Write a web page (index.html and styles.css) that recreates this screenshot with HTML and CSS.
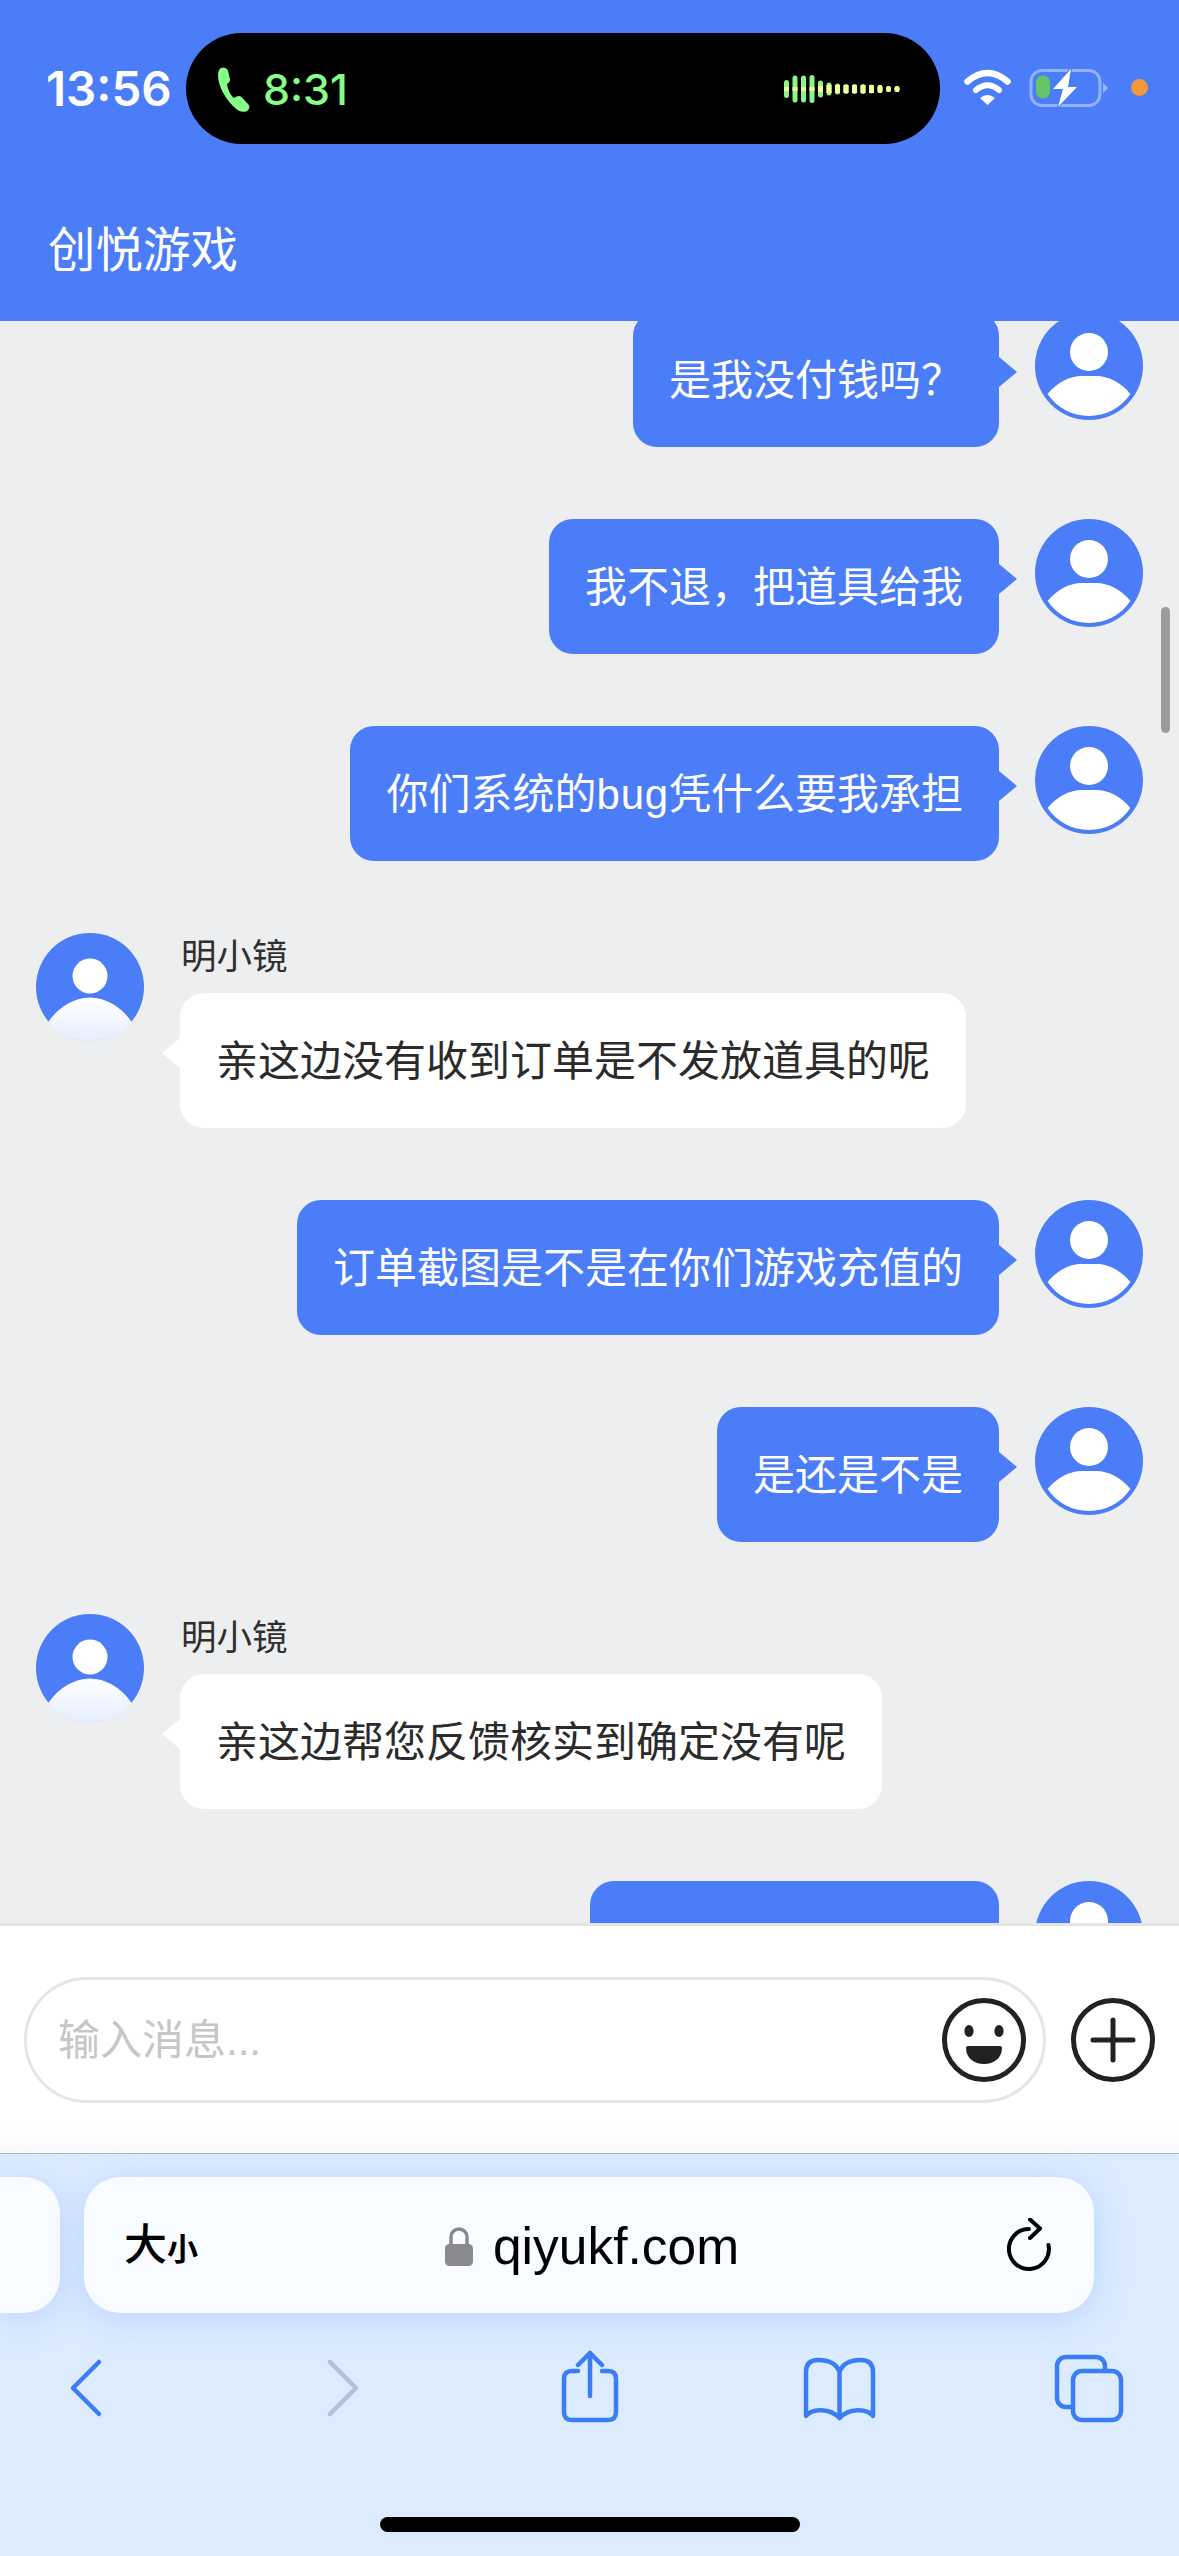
FILE: index.html
```html
<!DOCTYPE html>
<html lang="zh-CN">
<head>
<meta charset="utf-8">
<title>创悦游戏</title>
<link rel="stylesheet" href="styles.css">
</head>
<body>
<svg class="defs" width="0" height="0" aria-hidden="true">
  <defs>
    <linearGradient id="bodyfade" x1="0" y1="0" x2="0" y2="1">
      <stop offset="0" stop-color="#ffffff"/>
      <stop offset="1" stop-color="#e6eefe"/>
    </linearGradient>
    <symbol id="av-out" viewBox="0 0 108 108">
      <circle cx="54" cy="54" r="54" fill="#4a7df7"/>
      <circle cx="54" cy="40" r="19" fill="#fff"/>
      <path d="M12.6 82C22 70 36 64 46 64H62C72 64 86 70 95.4 82A50 50 0 0 1 12.6 82Z" fill="#fff"/>
    </symbol>
    <symbol id="av-in" viewBox="0 0 108 108">
      <circle cx="54" cy="54" r="54" fill="#4a7df7"/>
      <circle cx="54" cy="43" r="17.5" fill="#fff"/>
      <path d="M13 89C24 73 40 65 54 65S84 73 95 89A54 54 0 0 1 13 89Z" fill="url(#bodyfade)" stroke="url(#bodyfade)" stroke-width="1.2"/>
    </symbol>
  </defs>
</svg>
<div class="phone">
  <header class="header">
    <div class="status">
      <span class="time">13:56</span>
      <div class="island">
        <svg class="call-icon" width="32" height="46" viewBox="0 0 32 46"><path d="M3 1C6-.5 9 1 10 4L12 12C12.5 15 10 16 9 17C9.5 22 13 29 16 31C18 30 20 28 23 29.5L30 37C32 39 32 42 29 44C25 46 20 44.5 15 39C6 30 0 18 0 8C0 5 1 2 3 1Z" fill="#84ff87"/></svg>
        <span class="call-time">8:31</span>
        <svg class="wave" width="119" height="30" viewBox="0 0 119 30">
          <g fill="#8cf58a">
            <rect x="0" y="6" width="5" height="18" rx="2.5"/>
            <rect x="8.5" y="1.5" width="5" height="27" rx="2.5"/>
            <rect x="17" y="1.5" width="5" height="27" rx="2.5"/>
            <rect x="25.5" y="1" width="5" height="28" rx="2.5"/>
            <rect x="34" y="6.5" width="5" height="17" rx="2.5"/>
            <rect x="42.5" y="8.5" width="5" height="13" rx="2.5"/>
            <rect x="51" y="9.5" width="5" height="11" rx="2.5"/>
            <rect x="59.5" y="10" width="5" height="10" rx="2.5"/>
            <rect x="68" y="10" width="5" height="10" rx="2.5"/>
            <rect x="76.5" y="10" width="5" height="10" rx="2.5"/>
            <rect x="85" y="10.5" width="5" height="9" rx="2.5"/>
            <rect x="93.5" y="11" width="5" height="8" rx="2.5"/>
            <rect x="102" y="12" width="5" height="6" rx="2.5"/>
            <rect x="110.5" y="12" width="5" height="6" rx="2.5"/>
          </g>
          <g fill="#f4ff9c">
            <rect x="0" y="13" width="5" height="4"/><rect x="8.5" y="13" width="5" height="4"/>
            <rect x="17" y="13" width="5" height="4"/><rect x="25.5" y="13" width="5" height="4"/>
            <rect x="34" y="12" width="5" height="6"/><rect x="42.5" y="11" width="5" height="8"/>
            <rect x="51" y="11" width="5" height="8"/><rect x="59.5" y="11" width="5" height="8"/>
            <rect x="68" y="11" width="5" height="8"/><rect x="76.5" y="11" width="5" height="8"/>
            <rect x="85" y="11" width="5" height="8"/><rect x="93.5" y="11" width="5" height="8" rx="2.5"/>
            <rect x="102" y="12" width="5" height="6" rx="2.5"/><rect x="110.5" y="12" width="5" height="6" rx="2.5"/>
          </g>
        </svg>
      </div>
      <svg class="wifi" width="47" height="36" viewBox="0 0 47 36" fill="none" stroke="#fff">
        <path d="M3.5 12.5Q23.5-4.5 43.5 12.5" stroke-width="6.5" stroke-linecap="round"/>
        <path d="M12 21Q23.5 11.5 35 21" stroke-width="6" stroke-linecap="round"/>
        <path d="M16 29Q23.5 23 31 29L23.5 36Z" fill="#fff" stroke="none"/>
      </svg>
      <svg class="battery" width="82" height="40" viewBox="0 0 82 40">
        <rect x="2" y="2.5" width="69" height="35" rx="11" fill="none" stroke="#fff" stroke-opacity=".4" stroke-width="3"/>
        <path d="M74 14.5L79 20L74 25.5Z" fill="#fff" fill-opacity=".4"/>
        <rect x="7" y="7.5" width="14" height="23" rx="7" fill="#65c466"/>
        <path d="M42 1L24 21H34L29 39L48 19H39Z" fill="#fff" stroke="#4a7df7" stroke-width="2" stroke-linejoin="round" paint-order="stroke"/>
      </svg>
      <span class="mic-dot"></span>
    </div>
    <h1 class="title">创悦游戏</h1>
  </header>

  <main class="chat">
    <div class="thread">
      <div class="row out">
        <div class="bubble">是我没付钱吗？</div>
        <svg class="avatar"><use href="#av-out"/></svg>
      </div>
      <div class="row out">
        <div class="bubble">我不退，把道具给我</div>
        <svg class="avatar"><use href="#av-out"/></svg>
      </div>
      <div class="row out">
        <div class="bubble">你们系统的<span class="latin">bug</span>凭什么要我承担</div>
        <svg class="avatar"><use href="#av-out"/></svg>
      </div>
      <div class="row in">
        <svg class="avatar"><use href="#av-in"/></svg>
        <div class="incoming">
          <div class="name">明小镜</div>
          <div class="bubble">亲这边没有收到订单是不发放道具的呢</div>
        </div>
      </div>
      <div class="row out">
        <div class="bubble">订单截图是不是在你们游戏充值的</div>
        <svg class="avatar"><use href="#av-out"/></svg>
      </div>
      <div class="row out">
        <div class="bubble">是还是不是</div>
        <svg class="avatar"><use href="#av-out"/></svg>
      </div>
      <div class="row in">
        <svg class="avatar"><use href="#av-in"/></svg>
        <div class="incoming">
          <div class="name">明小镜</div>
          <div class="bubble">亲这边帮您反馈核实到确定没有呢</div>
        </div>
      </div>
      <div class="row out">
        <div class="bubble bubble-cut"></div>
        <svg class="avatar"><use href="#av-out"/></svg>
      </div>
    </div>
    <div class="scrollbar"></div>
  </main>

  <div class="composer">
    <div class="input">
      <span class="placeholder">输入消息...</span>
      <svg class="round-icon" width="84" height="84" viewBox="0 0 84 84">
        <circle cx="42" cy="42" r="39.5" fill="none" stroke="#222" stroke-width="5"/>
        <ellipse cx="27" cy="33" rx="4.6" ry="6" fill="#222"/>
        <ellipse cx="57" cy="33" rx="4.6" ry="6" fill="#222"/>
        <path d="M24 50Q24 48 26 48H58Q60 48 60 50C60 60 52 66 42 66C32 66 24 60 24 50Z" fill="#222"/>
      </svg>
    </div>
    <svg class="round-icon plus" width="84" height="84" viewBox="0 0 84 84" fill="none" stroke="#222">
      <circle cx="42" cy="42" r="39.5" stroke-width="5"/>
      <path d="M22 42H62M42 22V62" stroke-width="5" stroke-linecap="round"/>
    </svg>
  </div>

  <div class="safari">
    <div class="tabs-row">
      <div class="tab-stub"></div>
      <div class="urlbar">
        <div class="aa"><span class="aa-big">大</span><span class="aa-small">小</span></div>
        <div class="address">
          <svg width="28" height="39" viewBox="0 0 28 39">
            <path d="M6 18V10A8 8 0 0 1 22 10V18" fill="none" stroke="#8a8a8e" stroke-width="3.5"/>
            <rect x="0" y="17" width="28" height="22" rx="4.5" fill="#8a8a8e"/>
          </svg>
          <span class="host">qiyukf.com</span>
        </div>
        <svg class="reload" width="53" height="54" viewBox="0 0 53 54" fill="none" stroke="#000" stroke-width="4" stroke-linecap="round" stroke-linejoin="round">
          <path d="M22 11A20 20 0 1 0 41.5 27"/>
          <path d="M23 1.5L33 10.5L23 20"/>
        </svg>
      </div>
    </div>
    <nav class="toolbar">
      <svg class="tool" width="80" height="80" viewBox="0 0 80 80" fill="none" stroke="#3a7df6" stroke-width="4.5" stroke-linecap="round" stroke-linejoin="round">
        <path d="M52 12L26 38L52 64"/>
      </svg>
      <svg class="tool" width="80" height="80" viewBox="0 0 80 80" fill="none" stroke="#b5c0d3" stroke-width="4.5" stroke-linecap="round" stroke-linejoin="round">
        <path d="M33 12L59 38L33 64"/>
      </svg>
      <svg class="tool" width="80" height="80" viewBox="0 0 80 80" fill="none" stroke="#3a7df6" stroke-width="4.5" stroke-linecap="round" stroke-linejoin="round">
        <path d="M30 21H24Q16 21 16 29V62Q16 70 24 70H60Q68 70 68 62V29Q68 21 60 21H54"/>
        <path d="M42 46V3M30 15L42 3L54 15"/>
      </svg>
      <svg class="tool" width="80" height="80" viewBox="0 0 80 80" fill="none" stroke="#3a7df6" stroke-width="4.5" stroke-linecap="round" stroke-linejoin="round">
        <path d="M41.5 22C38 12 28 10 20 10C12 10 8 14 8 22V66C14 58 32 58 41.5 68C51 58 69 58 75 66V22C75 14 71 10 63 10C55 10 45 12 41.5 22V68"/>
      </svg>
      <svg class="tool" width="80" height="80" viewBox="0 0 80 80" stroke="#3a7df6" stroke-width="4.5" fill="none">
        <rect x="9" y="7" width="48" height="50" rx="9"/>
        <rect x="25" y="21" width="48" height="49" rx="9" fill="#dcebff"/>
      </svg>
    </nav>
    <div class="home-bar"></div>
  </div>
</div>
</body>
</html>
```
FILE: styles.css
```css
* { box-sizing: border-box; }
html, body { margin: 0; padding: 0; }
body {
  width: 1179px;
  height: 2556px;
  overflow: hidden;
  font-family: "Liberation Sans", "Noto Sans CJK SC", sans-serif;
  background: #edeef0;
}
.defs { position: absolute; }
.phone {
  width: 1179px;
  height: 2556px;
  display: flex;
  flex-direction: column;
  overflow: hidden;
}

/* header */
.header {
  height: 321px;
  flex: none;
  padding-top: 33px;
  background: #4a7df7;
  color: #fff;
}
.status {
  display: flex;
  align-items: center;
  height: 111px;
  padding-left: 46px;
}
.time {
  width: 140px;
  font-family: Inter, "Liberation Sans", sans-serif;
  font-size: 47.5px;
  font-weight: 600;
  color: #fff;
}
.island {
  width: 754px;
  height: 111px;
  border-radius: 55.5px;
  background: #000;
  display: flex;
  align-items: center;
  padding: 0 37px 0 32px;
}
.call-icon { flex: none; margin-top: 2px; }
.call-time {
  margin-left: 13px;
  font-family: Inter, "Liberation Sans", sans-serif;
  font-size: 43px;
  font-weight: 500;
  color: #84ff87;
}
.wave { margin-left: auto; flex: none; }
.wifi { margin-left: 24px; margin-bottom: 3px; flex: none; }
.battery { margin-left: 18px; flex: none; margin-bottom: 1px; }
.mic-dot {
  width: 17px;
  height: 17px;
  margin-left: 20px;
  margin-bottom: 3px;
  border-radius: 50%;
  background: #f39a37;
  flex: none;
}
.title {
  margin: 77px 0 0;
  padding: 0 0 0 48px;
  font-size: 47.5px;
  font-weight: 400;
  line-height: 60px;
}

/* chat */
.chat {
  flex: 1;
  min-height: 0;
  position: relative;
  overflow: hidden;
  background: #edeef0;
}
.thread { margin-top: -9px; }
.row {
  display: flex;
  gap: 36px;
  padding: 0 36px;
  margin-bottom: 72px;
  align-items: flex-start;
}
.row.out { justify-content: flex-end; }
.avatar { width: 108px; height: 108px; flex: none; }
.bubble {
  position: relative;
  padding: 37px 36px 35px;
  border-radius: 24px;
  font-size: 42px;
  line-height: 63px;
  white-space: nowrap;
}
.latin { letter-spacing: .8px; }
.out .bubble { background: #4a7df7; color: #fff; }
.in .bubble { background: #fff; color: #2b2b2b; width: max-content; }
.bubble-cut { width: 409px; height: 135px; }
.bubble::after {
  content: "";
  position: absolute;
  top: 45px;
  border-top: 15px solid transparent;
  border-bottom: 15px solid transparent;
}
.out .bubble::after { right: -18px; border-left: 18px solid #4a7df7; }
.in .bubble::after { left: -18px; border-right: 18px solid #fff; }
.name {
  height: 60px;
  padding: 0 0 0 1px;
  font-size: 35.5px;
  line-height: 49px;
  color: #2f2f2f;
}
.scrollbar {
  position: absolute;
  right: 9px;
  top: 286px;
  width: 9px;
  height: 126px;
  border-radius: 5px;
  background: #9b9b9b;
}

/* composer */
.composer {
  flex: none;
  height: 231px;
  display: flex;
  align-items: flex-start;
  padding: 51px 24px 0;
  background: linear-gradient(#fff 85%, #fafafa);
  border-top: 3px solid #e5e5e5;
  border-bottom: 1px solid #aeb4bf;
}
.input {
  width: 1022px;
  height: 126px;
  flex: none;
  display: flex;
  align-items: center;
  justify-content: space-between;
  padding: 0 17px 0 31px;
  border: 3px solid #e5e5e5;
  border-radius: 63px;
  background: #fff;
}
.placeholder { font-size: 42px; line-height: 56px; margin-top: 2px; color: #c6c6c6; }
.round-icon { flex: none; }
.plus { margin: 21px 0 0 25px; }

/* safari chrome */
.safari {
  flex: none;
  height: 402px;
  background-color: #dcebff;
}
.tabs-row {
  display: flex;
  gap: 24px;
  padding-top: 23px;
}
.tab-stub {
  width: 60px;
  height: 136px;
  flex: none;
  background: #f8fbff;
  border-radius: 0 36px 36px 0;
  box-shadow: 0 6px 34px rgba(120, 160, 255, .3);
}
.urlbar {
  width: 1010px;
  height: 136px;
  flex: none;
  display: grid;
  grid-template-columns: 1fr auto 1fr;
  align-items: center;
  padding: 0 34px 0 40px;
  background: #f8fbff;
  border-radius: 36px;
  box-shadow: 0 6px 34px rgba(120, 160, 255, .3);
}
.aa { color: #000; display: flex; align-items: baseline; line-height: 1; }
.aa-big { font-size: 43px; font-weight: 500; }
.aa-small { font-size: 31px; font-weight: 700; }
.address { display: flex; align-items: center; gap: 20px; margin-top: 2px; }
.host {
  font-family: "Liberation Sans", Arial, sans-serif;
  font-size: 51.5px;
  line-height: 60px;
  color: #000;
}
.reload { justify-self: end; }
.toolbar {
  display: flex;
  justify-content: space-between;
  padding: 0 51px 0 47px;
  margin-top: 37px;
}
.tool { flex: none; display: block; }
.home-bar {
  width: 420px;
  height: 15px;
  margin: 87px auto 0;
  border-radius: 8px;
  background: #000;
}
```
